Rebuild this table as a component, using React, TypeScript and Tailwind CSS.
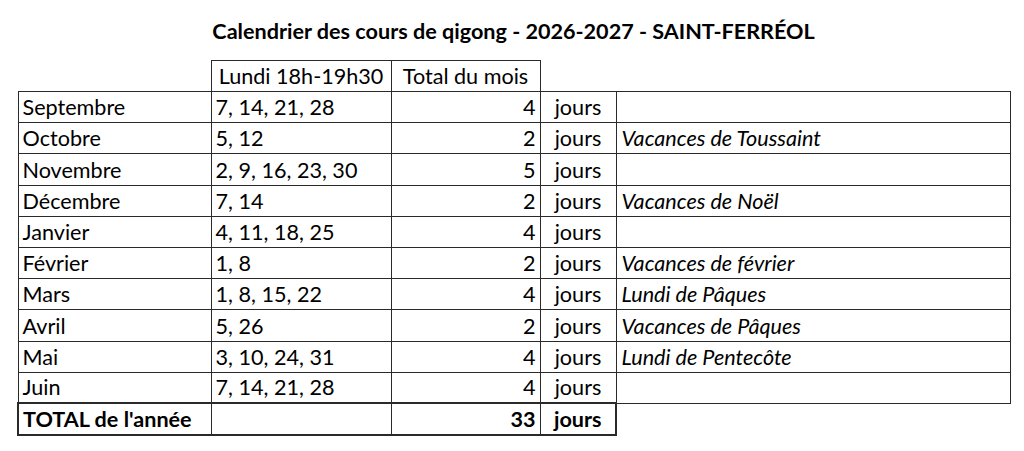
const rows = [
  { month: 'Septembre', days: '7, 14, 21, 28', total: 4, note: '' },
  { month: 'Octobre', days: '5, 12', total: 2, note: 'Vacances de Toussaint' },
  { month: 'Novembre', days: '2, 9, 16, 23, 30', total: 5, note: '' },
  { month: 'Décembre', days: '7, 14', total: 2, note: 'Vacances de Noël' },
  { month: 'Janvier', days: '4, 11, 18, 25', total: 4, note: '' },
  { month: 'Février', days: '1, 8', total: 2, note: 'Vacances de février' },
  { month: 'Mars', days: '1, 8, 15, 22', total: 4, note: 'Lundi de Pâques' },
  { month: 'Avril', days: '5, 26', total: 2, note: 'Vacances de Pâques' },
  { month: 'Mai', days: '3, 10, 24, 31', total: 4, note: 'Lundi de Pentecôte' },
  { month: 'Juin', days: '7, 14, 21, 28', total: 4, note: '' },
];

const cell = 'border border-[#2a2a2a] align-bottom pb-[3px] leading-[24px] whitespace-nowrap';

export default function App() {
  return (
    <div
      className="w-[1024px] h-[451px] bg-white text-black text-[21.6px] overflow-hidden"
      style={{ fontFamily: 'Lato, "Open Sans", sans-serif' }}
    >
      <h1 className="pt-[19px] text-center font-bold leading-[24px] pl-[3px]">
        Calendrier des cours de qigong - 2026-2027 - SAINT-FERRÉOL
      </h1>

      <table className="mt-[17px] ml-[17px] w-[992px] table-fixed border-collapse">
        <colgroup>
          <col className="w-[193px]" />
          <col className="w-[180px]" />
          <col className="w-[149px]" />
          <col className="w-[76px]" />
          <col className="w-[394px]" />
        </colgroup>
        <thead>
          <tr className="h-[31px]">
            <th />
            <th className={`${cell} font-normal text-center`}>Lundi 18h-19h30</th>
            <th className={`${cell} font-normal text-center`}>Total du mois</th>
            <th />
            <th />
          </tr>
        </thead>
        <tbody>
          {rows.map((r) => (
            <tr key={r.month} className="h-[31.2px]">
              <td className={`${cell} pl-[4px]`}>{r.month}</td>
              <td className={`${cell} pl-[4px]`}>{r.days}</td>
              <td className={`${cell} text-right pr-[4px]`}>{r.total}</td>
              <td className={`${cell} text-center`}>jours</td>
              <td className={`${cell} pl-[5px] italic`}>{r.note}</td>
            </tr>
          ))}
          <tr className="h-[32px] font-bold">
            <td className={`${cell} pl-[4px] border-2 border-r`}>TOTAL de l'année</td>
            <td className={`${cell} border-y-2`} />
            <td className={`${cell} border-y-2 text-right pr-[4px]`}>33</td>
            <td className={`${cell} border-2 border-l text-center`}>jours</td>
            <td />
          </tr>
        </tbody>
      </table>
    </div>
  );
}
